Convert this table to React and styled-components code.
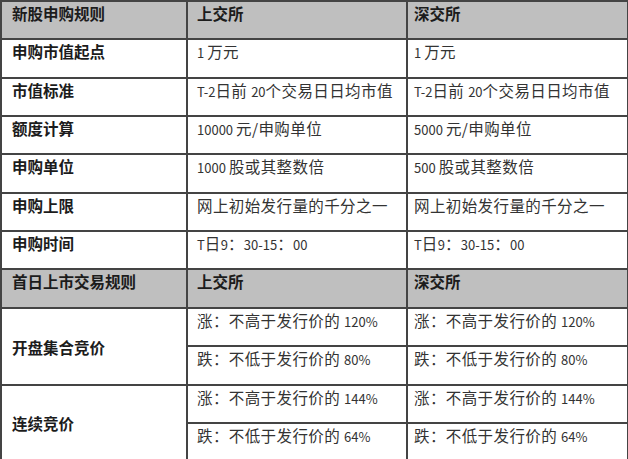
import React from 'react';
import styled, { createGlobalStyle } from 'styled-components';

const GlobalStyle = createGlobalStyle`
  html, body {
    margin: 0;
    padding: 0;
    background: #fff;
  }
  body {
    font-family: "Noto Sans CJK SC", "Noto Sans", sans-serif;
  }
`;

const Table = styled.table`
  width: 627px;
  border-collapse: collapse;
  table-layout: fixed;
  color: #333;
  font-size: 15.5px;
`;

const Row = styled.tr`
  height: ${p => p.$h || 38}px;
  background: ${p => (p.$head ? '#bfbfbf' : '#fff')};
`;

const Cell = styled.td`
  border: 2px solid #444;
  padding: ${p => (p.$middle ? '0 10px' : `0 ${p.$pad || 8}px`)};
  vertical-align: ${p => (p.$middle ? 'middle' : 'top')};
  line-height: 22px;
  white-space: nowrap;
  font-weight: ${p => (p.$bold ? 700 : 400)};
  color: ${p => (p.$bold ? '#1c1c1c' : '#333')};
  letter-spacing: ${p => (p.$bold ? '0' : '0.4px')};
`;

const Num = styled.span`
  font-size: 13px;
  letter-spacing: 0;
  margin-right: ${p => (p.$gap ? 3 : 0)}px;
`;

const Col = styled.col`
  width: ${p => p.$w}px;
`;

// row heights alternate so the lines land where the screenshot has them
const ruleRows = [
  { h: 39, name: '申购市值起点', sh: <><Num $gap>1</Num>万元</>, sz: <><Num $gap>1</Num>万元</> },
  {
    h: 38,
    name: '市值标准',
    sh: <><Num>T-2</Num>日前 <Num>20</Num>个交易日日均市值</>,
    sz: <><Num>T-2</Num>日前 <Num>20</Num>个交易日日均市值</>,
  },
  { h: 38, name: '额度计算', sh: <><Num $gap>10000</Num>元/申购单位</>, sz: <><Num $gap>5000</Num>元/申购单位</> },
  { h: 39, name: '申购单位', sh: <><Num $gap>1000</Num>股或其整数倍</>, sz: <><Num $gap>500</Num>股或其整数倍</> },
  { h: 38, name: '申购上限', sh: '网上初始发行量的千分之一', sz: '网上初始发行量的千分之一' },
  {
    h: 38,
    name: '申购时间',
    sh: <><Num>T</Num>日<Num>9</Num>：<Num>30-15</Num>：<Num>00</Num></>,
    sz: <><Num>T</Num>日<Num>9</Num>：<Num>30-15</Num>：<Num>00</Num></>,
  },
];

const tradeRows = [
  { name: '开盘集合竞价', up: '120%', down: '80%', h: [38, 39] },
  { name: '连续竞价', up: '144%', down: '64%', h: [38, 38] },
];

const HeadRow = ({ title, h }) => (
  <Row $head $h={h}>
    <Cell $bold $pad={10}>{title}</Cell>
    <Cell $bold $pad={9}>上交所</Cell>
    <Cell $bold $pad={6}>深交所</Cell>
  </Row>
);

const App = () => (
  <>
    <GlobalStyle />
    <Table>
      <colgroup>
        <Col $w={186} />
        <Col $w={220} />
        <Col $w={221} />
      </colgroup>
      <tbody>
        <HeadRow title="新股申购规则" h={38} />
        {ruleRows.map(r => (
          <Row key={r.name} $h={r.h}>
            <Cell $bold $pad={10}>{r.name}</Cell>
            <Cell $pad={9}>{r.sh}</Cell>
            <Cell $pad={6}>{r.sz}</Cell>
          </Row>
        ))}
        <HeadRow title="首日上市交易规则" h={39} />
        {tradeRows.map(r => (
          <React.Fragment key={r.name}>
            <Row $h={r.h[0]}>
              <Cell $bold $middle rowSpan={2}>{r.name}</Cell>
              <Cell $pad={9}>涨：不高于发行价的 <Num>{r.up}</Num></Cell>
              <Cell $pad={6}>涨：不高于发行价的 <Num>{r.up}</Num></Cell>
            </Row>
            <Row $h={r.h[1]}>
              <Cell $pad={9}>跌：不低于发行价的 <Num>{r.down}</Num></Cell>
              <Cell $pad={6}>跌：不低于发行价的 <Num>{r.down}</Num></Cell>
            </Row>
          </React.Fragment>
        ))}
      </tbody>
    </Table>
  </>
);

export default App;
